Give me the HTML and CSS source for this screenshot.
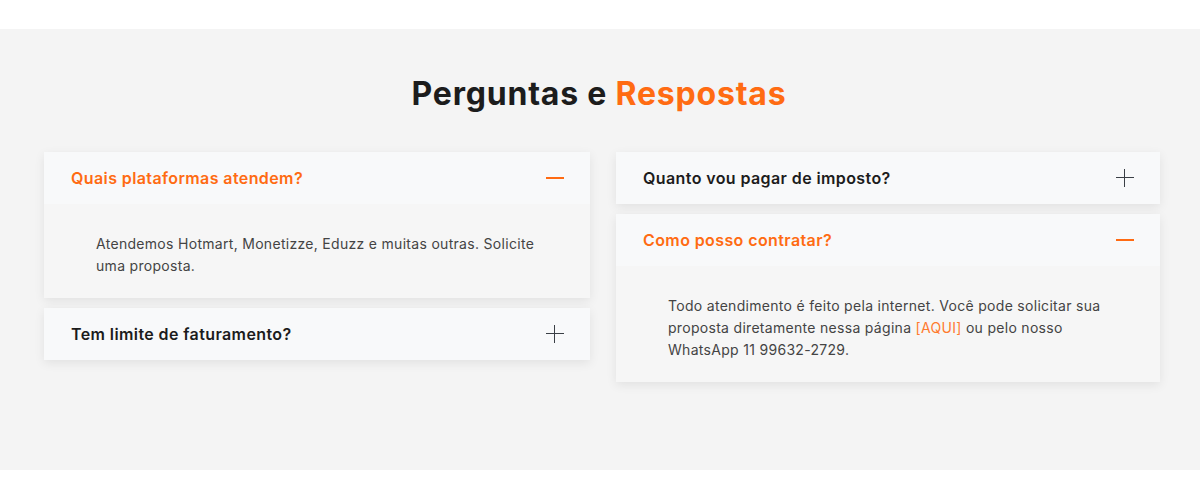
FILE: index.html
```html
<!DOCTYPE html>
<html lang="pt-BR">
<head>
    <meta charset="UTF-8">
    <meta name="viewport" content="width=device-width, initial-scale=1.0">
    <title>Perguntas e Respostas</title>
    <link rel="stylesheet" href="styles.css">
</head>
<body>
    <div class="topo"></div>
    <section class="faq">
        <h2>Perguntas e <span>Respostas</span></h2>
        <div class="faq-grid">
            <div class="faq-col">
                <div class="faq-item aberto">
                    <div class="faq-pergunta">
                        <span>Quais plataformas atendem?</span>
                        <i class="icone menos"></i>
                    </div>
                    <div class="faq-resposta">
                        <p>Atendemos Hotmart, Monetizze, Eduzz e muitas outras. Solicite uma proposta.</p>
                    </div>
                </div>
                <div class="faq-item">
                    <div class="faq-pergunta">
                        <span>Tem limite de faturamento?</span>
                        <i class="icone mais"></i>
                    </div>
                </div>
            </div>
            <div class="faq-col">
                <div class="faq-item">
                    <div class="faq-pergunta">
                        <span>Quanto vou pagar de imposto?</span>
                        <i class="icone mais"></i>
                    </div>
                </div>
                <div class="faq-item aberto">
                    <div class="faq-pergunta">
                        <span>Como posso contratar?</span>
                        <i class="icone menos"></i>
                    </div>
                    <div class="faq-resposta">
                        <p>Todo atendimento é feito pela internet. Você pode solicitar sua proposta diretamente nessa página <span class="destaque">[AQUI]</span> ou pelo nosso WhatsApp 11 99632-2729.</p>
                    </div>
                </div>
            </div>
        </div>
    </section>
</body>
</html>
```

FILE: styles.css
```css
body {
    font-family: 'Inter', 'Liberation Sans', sans-serif;
    background: #fff;
    margin: 0;
    padding: 0;
}
.topo {
    height: 29px;
}
.faq {
    background: #f4f4f4;
    height: 441px;
    box-sizing: border-box;
    padding: 45px 40px 0 44px;
}
.faq h2 {
    text-align: center;
    font-size: 32px;
    font-weight: 700;
    letter-spacing: 0.8px;
    color: #1c1c1c;
    margin: 0 6px 38px 0;
    line-height: 40px;
}
.faq h2 span {
    color: #ff6b12;
}
.faq-grid {
    display: grid;
    grid-template-columns: 546px 544px;
    gap: 26px;
}
.faq-col {
    display: flex;
    flex-direction: column;
    gap: 10px;
}
.faq-item {
    background: #f6f6f6;
    box-shadow: 0 3px 10px rgba(0, 0, 0, 0.08);
}
.faq-pergunta {
    height: 52px;
    background: #f8f9fa;
    display: flex;
    align-items: center;
    justify-content: space-between;
    padding: 0 26px 0 27px;
    font-size: 16px;
    font-weight: 600;
    letter-spacing: 0.4px;
    color: #1c1c1c;
}
.aberto .faq-pergunta {
    color: #ff6b12;
}
.faq-resposta {
    padding: 29px 52px 21px;
}
.faq-resposta p {
    margin: 0;
    font-size: 14px;
    line-height: 22px;
    letter-spacing: 0.3px;
    color: #444;
}
.destaque {
    color: #ff7a2e;
}
.icone {
    position: relative;
    width: 18px;
    height: 18px;
}
.icone::before,
.icone::after {
    content: "";
    position: absolute;
    background: #3a3f45;
}
.icone::before {
    left: 0;
    right: 0;
    top: 8px;
    height: 1px;
}
.icone::after {
    top: 0;
    bottom: 0;
    left: 8px;
    width: 1px;
}
.icone.menos::before {
    height: 2px;
    background: #ff6b12;
}
.icone.menos::after {
    display: none;
}
```
